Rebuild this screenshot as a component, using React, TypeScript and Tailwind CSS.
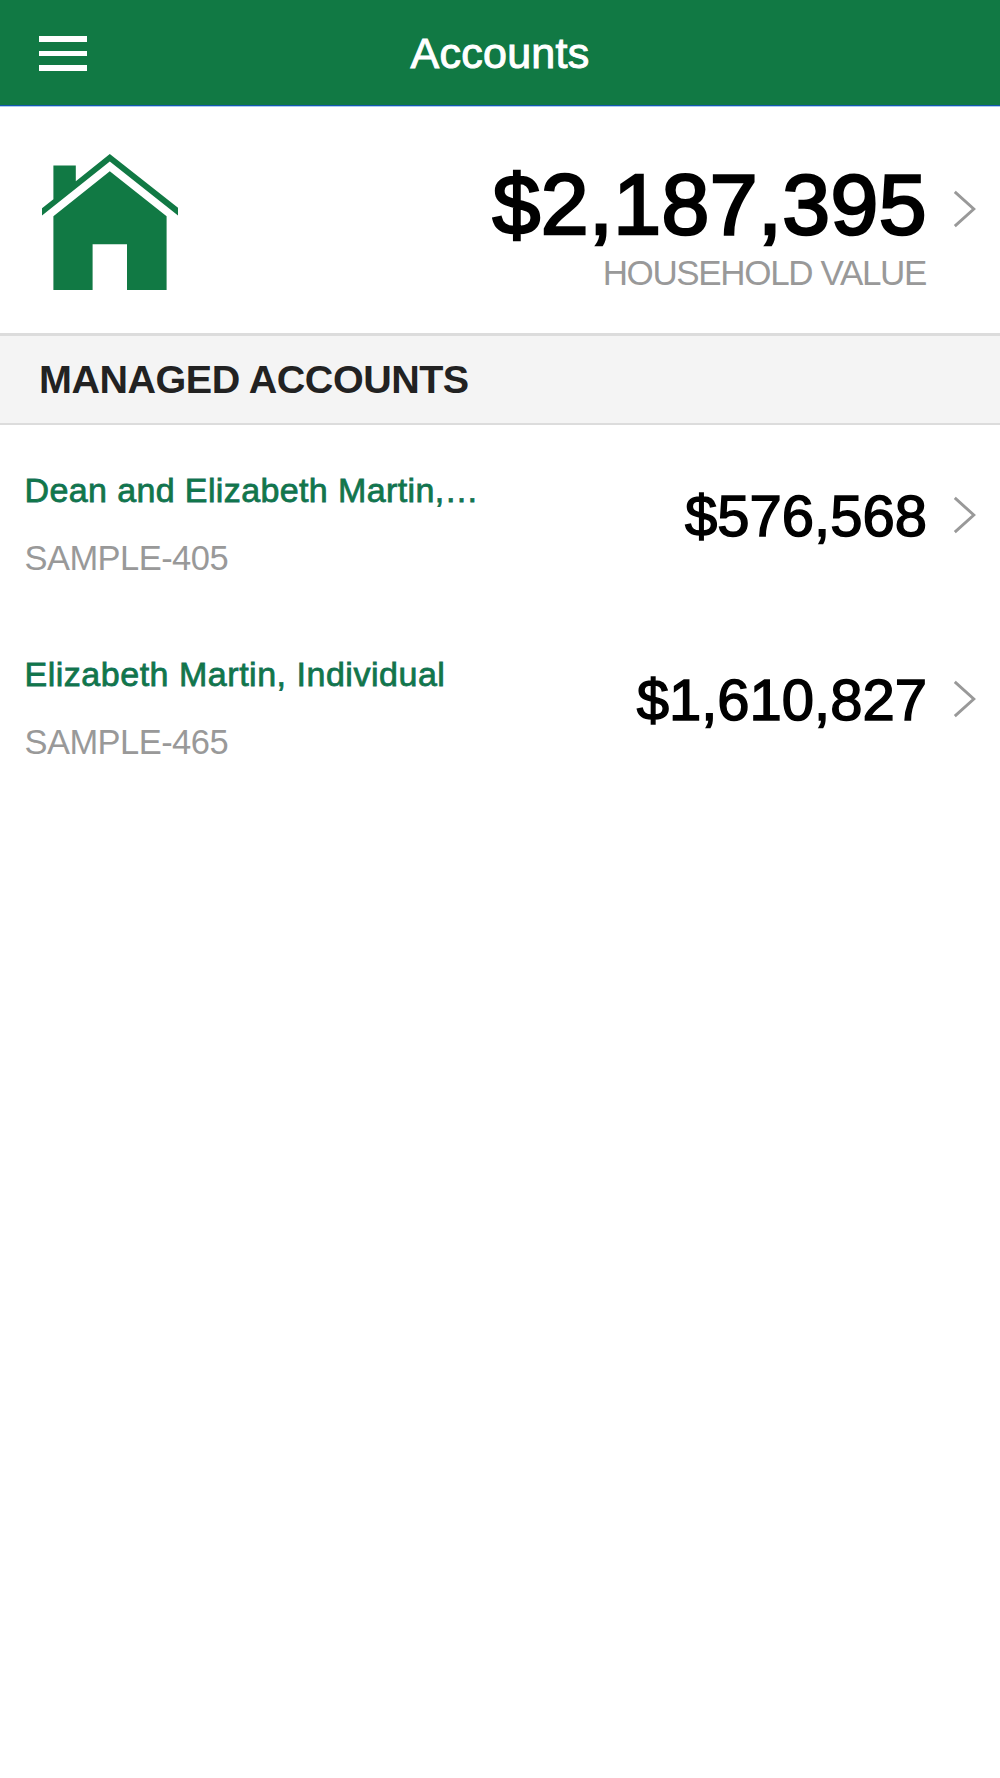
const accounts = [
  {
    name: 'Dean and Elizabeth Martin,…',
    nameClass: 'tracking-[0.38px]',
    id: 'SAMPLE-405',
    value: '$576,568',
  },
  {
    name: 'Elizabeth Martin, Individual',
    nameClass: 'tracking-[0.52px]',
    id: 'SAMPLE-465',
    value: '$1,610,827',
  },
];

function Chevron() {
  return (
    <svg className="h-[38px] w-[24px]" viewBox="0 0 24 38" fill="none" stroke="#999999" strokeWidth="2.9">
      <path d="M1.8 1.9 L20.8 19 L1.8 36.1" />
    </svg>
  );
}

function House() {
  return (
    <svg className="h-[136px] w-[136px]" viewBox="42 154 136 136" fill="#117944">
      <path d="M109.8 154 L178 207.8 V215.6 L109.8 161.4 L42 215.6 V208.3 L53.4 199.2 V165.4 H75.8 V181.2 Z" />
      <path d="M109.8 171.2 L166.6 216.2 V290 H127 V244.2 H92.6 V290 H53.4 V216.2 Z" />
    </svg>
  );
}

export default function App() {
  return (
    <div className="flex h-[1778px] w-[1000px] flex-col bg-white font-['Liberation_Sans',Arial,sans-serif] whitespace-nowrap">
      <header className="grid h-[106px] grid-cols-[1fr_auto_1fr] items-center border-b border-[#1458b0] bg-[#117944] pt-[2px]">
        <button className="ml-[39px] flex w-12 flex-col gap-[9px]" aria-label="Menu">
          <span className="h-[5.5px] w-full bg-white" />
          <span className="h-[5.5px] w-full bg-white" />
          <span className="h-[5.5px] w-full bg-white" />
        </button>
        <h1 className="pb-[2px] text-[43px] leading-[50px] tracking-[0.25px] text-white [-webkit-text-stroke:1px_white]">Accounts</h1>
      </header>

      <section className="flex h-[227px] items-start justify-between border-t border-[#a9cdf0] pr-[23px] pl-[42px]">
        <div className="pt-[47px]">
          <House />
        </div>
        <div className="flex">
          <div className="flex flex-col items-end pt-[53px]">
            <div className="text-[86px] leading-[88px] tracking-[0.4px] [-webkit-text-stroke:2.6px_black]">$2,187,395</div>
            <div className="mt-[7px] pr-px text-[35px] leading-[35px] tracking-[-1.35px] text-[#999999]">HOUSEHOLD VALUE</div>
          </div>
          <div className="ml-[26px] pt-[83px]">
            <Chevron />
          </div>
        </div>
      </section>

      <h2 className="flex h-[92px] items-center border-t-[3px] border-b-2 border-[#dcdcdc] bg-[#f4f4f4] pt-px pl-[39px] text-[39.5px] font-bold tracking-[-0.48px] text-[#222222]">
        MANAGED ACCOUNTS
      </h2>

      <ul>
        {accounts.map((account) => (
          <li key={account.id} className="flex h-[183.5px] justify-between pr-[23px] pl-[24.5px]">
            <div className="pt-8 text-[34px] leading-[67px]">
              <div className={`text-[#117944] [-webkit-text-stroke:0.8px_#14705a] ${account.nameClass}`}>{account.name}</div>
              <div className="pt-px text-[34.5px] tracking-[-0.55px] text-[#999999]">{account.id}</div>
            </div>
            <div className="flex">
              <div className="pt-[61px] text-[58px] leading-[60px] [-webkit-text-stroke:1.5px_black]">{account.value}</div>
              <div className="ml-[26px] pt-[71px]">
                <Chevron />
              </div>
            </div>
          </li>
        ))}
      </ul>
    </div>
  );
}
